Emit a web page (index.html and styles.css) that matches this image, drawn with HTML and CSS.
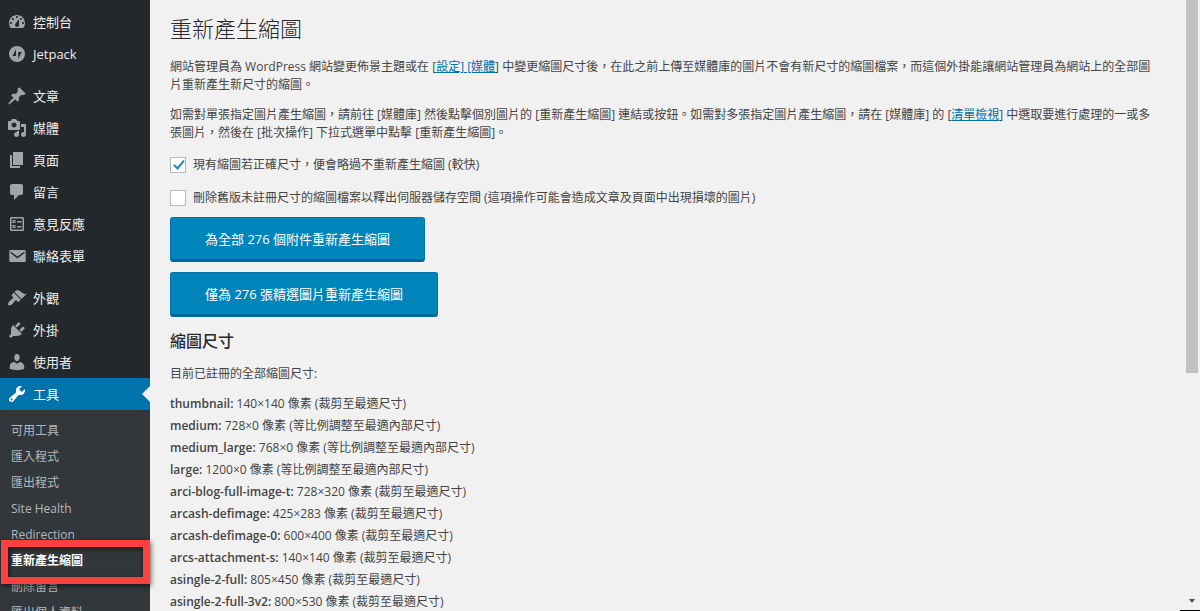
FILE: index.html
```html
<!DOCTYPE html>
<html lang="zh-Hant">

<head>
    <meta charset="UTF-8">
    <meta name="viewport" content="width=device-width, initial-scale=1.0">
    <title>重新產生縮圖</title>
    <link rel="stylesheet" href="styles.css">
</head>

<body>
    <div class="layout">
        <nav class="sidebar">
            <ul class="menu">
                <li><a href="#">
                    <svg class="icon" viewBox="0 0 20 20"><path fill-rule="evenodd" d="M3.76 16h12.48c1.1-1.37 1.76-3.11 1.76-5 0-4.42-3.58-8-8-8s-8 3.58-8 8c0 1.89.66 3.63 1.76 5zM10 4c.55 0 1 .45 1 1s-.45 1-1 1-1-.45-1-1 .45-1 1-1zM6 6c.55 0 1 .45 1 1s-.45 1-1 1-1-.45-1-1 .45-1 1-1zM14 6c.55 0 1 .45 1 1s-.45 1-1 1-1-.45-1-1 .45-1 1-1zM8.630 11.550L12 7v6c0 1.100-.9 2-2 2s-2-.9-2-2c0-.57.24-1.080.63-1.450zM4 10c.55 0 1 .45 1 1s-.45 1-1 1-1-.45-1-1 .45-1 1-1zM16 10c.55 0 1 .45 1 1s-.45 1-1 1-1-.45-1-1 .45-1 1-1z"/></svg>
                    控制台</a></li>
                <li><a href="#">
                    <svg class="icon" viewBox="0 0 20 20"><path fill-rule="evenodd" d="M10 2a8 8 0 1 0 0 16 8 8 0 0 0 0-16zM9 5v7H5.500zM11.200 8h3.500L11.200 15z"/></svg>
                    Jetpack</a></li>
                <li class="gap"><a href="#">
                    <svg class="icon" viewBox="0 0 20 20"><path d="M10.44 3.02l1.82-1.82 6.36 6.35-1.83 1.82c-1.05-.68-2.48-.57-3.41.36l-.75.75c-.92.93-1.04 2.35-.35 3.41l-1.83 1.82-2.41-2.41-2.8 2.79c-.42.42-3.38 2.71-3.8 2.29s1.86-3.39 2.28-3.81l2.79-2.79L4.1 9.36l1.83-1.82c1.05.69 2.48.57 3.4-.36l.75-.75c.93-.92 1.05-2.35.36-3.41z"/></svg>
                    文章</a></li>
                <li><a href="#">
                    <svg class="icon" viewBox="0 0 20 20"><path fill-rule="evenodd" d="M13 11V4c0-.55-.45-1-1-1h-1.67L9 1H5L3.67 3H2c-.55 0-1 .45-1 1v7c0 .55.45 1 1 1h10c.55 0 1-.45 1-1zM7 4.5c1.38 0 2.5 1.12 2.5 2.5S8.38 9.5 7 9.5 4.5 8.38 4.5 7 5.62 4.5 7 4.5zM14 6h5v10.500c0 1.380-1.120 2.500-2.500 2.500S14 17.880 14 16.500s1.120-2.500 2.500-2.500c.17 0 .34.02.5.05V9h-3V6zM10 14.050V13h2v3.500c0 1.380-1.120 2.500-2.500 2.500S7 17.880 7 16.500 8.120 14 9.500 14c.17 0 .34.02.5.05z"/></svg>
                    媒體</a></li>
                <li><a href="#">
                    <svg class="icon" viewBox="0 0 20 20"><path d="M6 15V2h10v13H6zm-1 1h8v2H3V5h2v11z"/></svg>
                    頁面</a></li>
                <li><a href="#">
                    <svg class="icon" viewBox="0 0 20 20"><path d="M5 2h9c1.100 0 2 .9 2 2v7c0 1.100-.9 2-2 2h-2l-5 5v-5H5c-1.100 0-2-.9-2-2V4c0-1.100.9-2 2-2z"/></svg>
                    留言</a></li>
                <li><a href="#">
                    <svg class="icon" viewBox="0 0 20 20"><path fill-rule="evenodd" d="M4 3h12l1 1v12l-1 1H4l-1-1V4zM4.500 4.500v11h11v-11zM5.500 6h3v3h-3zM6.500 7v1h1V7zM10 7h4.500v1.500H10zM5.500 11h3v3h-3zM6.500 12v1h1v-1zM10 12h4.500v1.500H10z"/></svg>
                    意見反應</a></li>
                <li><a href="#">
                    <svg class="icon" viewBox="0 0 20 20"><path fill-rule="evenodd" d="M3 4h15q.7 0 .7.7v10.600q0 .7-.7.7H3q-.7 0-.7-.7V4.700Q2.300 4 3 4zM3.500 5.500v1.600l7 5.400 7-5.400V5.500l-7 5z"/></svg>
                    聯絡表單</a></li>
                <li class="gap"><a href="#">
                    <svg class="icon" viewBox="0 0 20 20"><path d="M14.48 11.06L7.41 3.99l1.5-1.5c.5-.56 2.3-.47 3.51.32 1.21.8 1.43 1.28 2.91 2.1 1.18.64 2.45 1.26 4.45.85zm-.71.71L6.7 4.7 4.93 6.47c-.39.39-.39 1.02 0 1.41l1.06 1.06c.39.39.39 1.03 0 1.42-.6.6-1.43 1.11-2.21 1.69-.35.26-.7.53-1.01.84C1.43 14.23.4 16.08 1.4 17.07c.99 1 2.84-.03 4.18-1.36.31-.31.58-.66.85-1.02.57-.78 1.08-1.61 1.69-2.21.39-.39 1.02-.39 1.41 0l1.06 1.06c.39.39 1.02.39 1.41 0z"/></svg>
                    外觀</a></li>
                <li><a href="#">
                    <svg class="icon" viewBox="0 0 20 20"><path d="M13.11 4.36L9.87 7.6 8 5.73l3.24-3.24c.35-.34 1.05-.2 1.56.32.52.51.66 1.21.31 1.55zm-8 1.77l.91-1.12 9.01 9.01-1.19.84c-.71.71-2.63 1.16-3.82 1.16H6.14L4.9 17.26c-.59.59-1.54.59-2.12 0-.59-.58-.59-1.53 0-2.12l1.24-1.24v-3.88c0-1.13.4-3.19 1.09-3.89zm7.26 3.97l3.24-3.24c.34-.35 1.04-.21 1.55.31.52.51.66 1.21.31 1.55l-3.24 3.25z"/></svg>
                    外掛</a></li>
                <li><a href="#">
                    <svg class="icon" viewBox="0 0 20 20"><path d="M10 9.25c-2.27 0-2.73-3.44-2.73-3.44C7 4.02 7.82 2 9.97 2c2.16 0 2.98 2.02 2.71 3.81 0 0-.41 3.44-2.68 3.44zm0 2.57L12.72 10c2.39 0 4.52 2.33 4.52 4.53v2.49s-3.65 1.13-7.24 1.13c-3.65 0-7.24-1.13-7.24-1.13v-2.49c0-2.25 1.94-4.48 4.47-4.48z"/></svg>
                    使用者</a></li>
                <li class="current"><a href="#">
                    <svg class="icon" viewBox="0 0 20 20"><path d="M16.68 9.77c-1.34 1.34-3.3 1.67-4.95.99l-5.41 6.52c-.99.99-2.59.99-3.58 0s-.99-2.59 0-3.57l6.52-5.42c-.68-1.65-.35-3.61.99-4.95 1.28-1.28 3.12-1.62 4.72-1.06l-2.89 2.89 2.82 2.82 2.86-2.87c.53 1.58.18 3.39-1.08 4.65zM3.81 16.21c.4.39 1.04.39 1.43 0 .4-.4.4-1.04 0-1.43-.39-.4-1.03-.4-1.43 0-.39.39-.39 1.03 0 1.43z"/></svg>
                    工具</a></li>
            </ul>
            <ul class="submenu">
                <li><a href="#">可用工具</a></li>
                <li><a href="#">匯入程式</a></li>
                <li><a href="#">匯出程式</a></li>
                <li><a href="#">Site Health</a></li>
                <li><a href="#">Redirection</a></li>
                <li class="active"><a href="#">重新產生縮圖</a></li>
                <li><a href="#">刪除留言</a></li>
                <li><a href="#">匯出個人資料</a></li>
            </ul>
        </nav>

        <main class="content">
            <h1>重新產生縮圖</h1>
            <p>網站管理員為 WordPress 網站變更佈景主題或在 [<a href="#">設定] [媒體</a>] 中變更縮圖尺寸後，在此之前上傳至媒體庫的圖片不會有新尺寸的縮圖檔案，而這個外掛能讓網站管理員為網站上的全部圖片重新產生新尺寸的縮圖。</p>
            <p>如需對單張指定圖片產生縮圖，請前往 [媒體庫] 然後點擊個別圖片的 [重新產生縮圖] 連結或按鈕。如需對多張指定圖片產生縮圖，請在 [媒體庫] 的 [<a href="#">清單檢視</a>] 中選取要進行處理的一或多張圖片，然後在 [批次操作] 下拉式選單中點擊 [重新產生縮圖]。</p>

            <form class="options">
                <div class="option">
                    <input type="checkbox" id="skip" checked>
                    <label for="skip">現有縮圖若正確尺寸，便會略過不重新產生縮圖 (較快)</label>
                </div>
                <div class="option">
                    <input type="checkbox" id="delete">
                    <label for="delete">刪除舊版未註冊尺寸的縮圖檔案以釋出伺服器儲存空間 (這項操作可能會造成文章及頁面中出現損壞的圖片)</label>
                </div>
                <div class="buttons">
                    <button type="button">為全部 276 個附件重新產生縮圖</button>
                    <button type="button">僅為 276 張精選圖片重新產生縮圖</button>
                </div>
            </form>

            <h2>縮圖尺寸</h2>
            <p class="intro">目前已註冊的全部縮圖尺寸:</p>
            <ul class="sizes">
                <li><strong>thumbnail:</strong> 140×140 像素 (裁剪至最適尺寸)</li>
                <li><strong>medium:</strong> 728×0 像素 (等比例調整至最適內部尺寸)</li>
                <li><strong>medium_large:</strong> 768×0 像素 (等比例調整至最適內部尺寸)</li>
                <li><strong>large:</strong> 1200×0 像素 (等比例調整至最適內部尺寸)</li>
                <li><strong>arci-blog-full-image-t:</strong> 728×320 像素 (裁剪至最適尺寸)</li>
                <li><strong>arcash-defimage:</strong> 425×283 像素 (裁剪至最適尺寸)</li>
                <li><strong>arcash-defimage-0:</strong> 600×400 像素 (裁剪至最適尺寸)</li>
                <li><strong>arcs-attachment-s:</strong> 140×140 像素 (裁剪至最適尺寸)</li>
                <li><strong>asingle-2-full:</strong> 805×450 像素 (裁剪至最適尺寸)</li>
                <li><strong>asingle-2-full-3v2:</strong> 800×530 像素 (裁剪至最適尺寸)</li>
            </ul>
        </main>

        <div class="scrollbar">
            <div class="thumb"></div>
            <div class="arrow"></div>
            <div class="corner"></div>
        </div>
    </div>
</body>

</html>
```

FILE: styles.css
```css
*,
*::before,
*::after {
    box-sizing: border-box;
}

body {
    margin: 0;
    background-color: #f1f1f1;
    color: #444;
    font-family: "Open Sans", "Noto Sans CJK TC", sans-serif;
    font-size: 12px;
    line-height: 18px;
}

ul {
    list-style: none;
    margin: 0;
    padding: 0;
}

.layout {
    display: flex;
    height: 100vh;
    overflow: hidden;
}

/* Left admin menu */
.sidebar {
    flex: 0 0 150px;
    background-color: #23282d;
}

.menu {
    padding-top: 6px;
    font-size: 13px;
}

.menu a {
    display: flex;
    align-items: center;
    gap: 6px;
    height: 32px;
    padding-left: 7px;
    color: #eee;
    text-decoration: none;
}

.menu .gap {
    margin-top: 10px;
}

.icon {
    width: 20px;
    height: 20px;
    fill: #a0a5aa;
}

.menu .current {
    position: relative;
    background-color: #0073aa;
}

.menu .current a {
    color: #fff;
}

.current .icon {
    fill: #fff;
}

/* Arrow pointing out of the current item */
.current::after {
    content: "";
    position: absolute;
    right: 0;
    top: 8px;
    border: 8px solid transparent;
    border-left-width: 0;
    border-right-color: #f1f1f1;
}

.submenu {
    padding-top: 8px;
    background-color: #32373c;
}

.submenu a {
    display: block;
    padding-left: 11px;
    line-height: 26px;
    color: #b4b9be;
    text-decoration: none;
}

.submenu .active {
    position: relative;
}

.submenu .active a {
    color: #fff;
    font-weight: 700;
}

/* Red frame over the active item */
.active::after {
    content: "";
    position: absolute;
    left: 1px;
    right: 0;
    top: -8px;
    height: 44px;
    border: 7px solid #ff4040;
    box-shadow: 1px 2px 5px rgba(0, 0, 0, 0.6), inset 1px 2px 5px rgba(0, 0, 0, 0.6);
}

/* Page content */
.content {
    flex: 1;
    padding: 14px 24px 0 20px;
}

h1 {
    margin: 0 0 16px;
    color: #23282d;
    font-size: 22px;
    font-weight: 300;
    line-height: 28px;
}

h2 {
    margin: 12px 0;
    color: #23282d;
    font-size: 16px;
    font-weight: 500;
    line-height: 24px;
}

p {
    margin: 0 0 12px;
}

.content a {
    color: #0073aa;
}

.options {
    margin-top: 14px;
}

.option {
    display: flex;
    align-items: center;
    gap: 7px;
}

.option + .option {
    margin-top: 15px;
}

.option input {
    appearance: none;
    width: 16px;
    height: 16px;
    margin: 0;
    border: 1px solid #b4b9be;
    background-color: #fff;
}

.option input:checked::before {
    content: "";
    display: block;
    width: 6px;
    height: 11px;
    margin: 0 0 0 5px;
    border: solid #1e8cbe;
    border-width: 0 2px 2px 0;
    transform: rotate(40deg);
}

.buttons {
    display: flex;
    flex-direction: column;
    align-items: flex-start;
    gap: 10px;
    margin-top: 10px;
}

.buttons button {
    height: 45px;
    padding: 0 34px;
    border: 1px solid #0073aa;
    border-bottom: 3px solid #006799;
    border-radius: 3px;
    background-color: #0085ba;
    color: #fff;
    font-family: inherit;
    font-size: 13px;
}

.intro {
    margin-bottom: 10px;
}

.sizes {
    line-height: 22px;
}

strong {
    font-weight: 600;
}

/* Scrollbar at the window edge */
.scrollbar {
    display: flex;
    flex: 0 0 20px;
    flex-direction: column;
    align-items: flex-end;
}

.thumb {
    flex: 0 0 61%;
    width: 12px;
    margin-right: 2px;
    background-color: #c1c1c1;
}

.arrow {
    margin: auto 5px 7px 0;
    border: 3px solid transparent;
    border-top: 4px solid #505050;
    border-bottom-width: 0;
}

.corner {
    width: 20px;
    height: 1px;
    background-color: #000;
}
```
